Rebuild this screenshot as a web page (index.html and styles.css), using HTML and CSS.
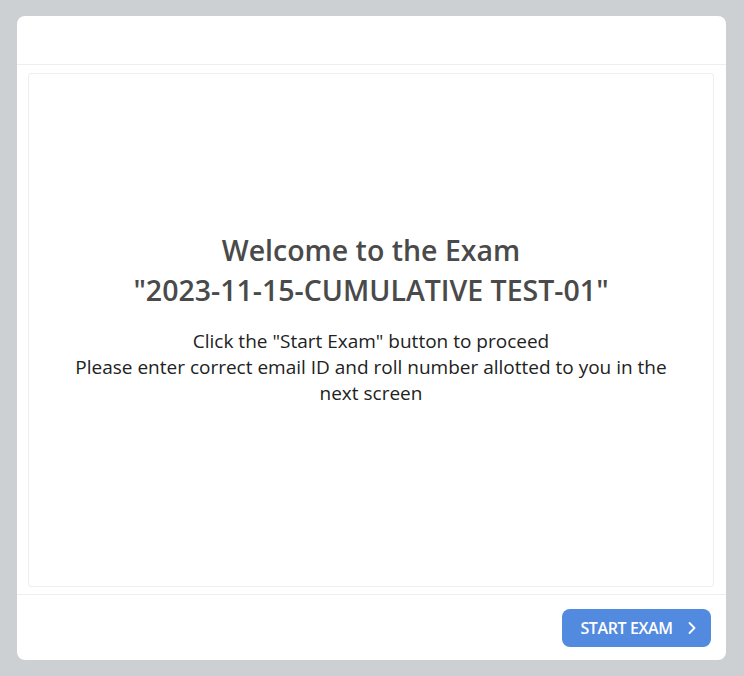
FILE: index.html
```html
<!DOCTYPE html>
<html>
<head>
<meta charset="utf-8">
<link rel="stylesheet" href="styles.css">
</head>
<body>
<div class="card">
  <div class="card-header"></div>
  <div class="card-body">
    <div class="panel">
      <h1 class="title">Welcome to the Exam<br>"2023-11-15-CUMULATIVE TEST-01"</h1>
      <p class="info">Click the "Start Exam" button to proceed<br>Please enter correct email ID and roll number allotted to you in the next screen</p>
    </div>
  </div>
  <div class="card-footer">
    <button class="start-btn">START EXAM
      <svg class="chev" width="10" height="14" viewBox="0 0 10 14"><path d="M2.5 2 L7.5 7 L2.5 12" fill="none" stroke="#fff" stroke-width="1.8" stroke-linecap="round" stroke-linejoin="round"/></svg>
    </button>
  </div>
</div>
</body>
</html>
```
FILE: styles.css
```css
html, body {
  margin: 0;
  padding: 0;
}
body {
  background: #ccd0d3;
  padding: 16px 18px 16px 17px;
  font-family: "Open Sans", "Noto Sans", sans-serif;
}
.card {
  background: #fff;
  border-radius: 8px;
  height: 644px;
  display: flex;
  flex-direction: column;
}
.card-header {
  height: 48px;
  border-bottom: 1px solid #eeeeee;
}
.card-body {
  flex: 1;
  padding: 8px 12px 7px 11px;
  display: flex;
  border-bottom: 1px solid #eeeeee;
}
.panel {
  flex: 1;
  border: 1px solid #eeeeee;
  border-radius: 3px;
  display: flex;
  flex-direction: column;
  align-items: center;
  justify-content: center;
  text-align: center;
  padding: 0 40px 24px;
}
.title {
  margin: 0;
  font-size: 28.5px;
  line-height: 40px;
  font-weight: 600;
  color: #4a4a4a;
}
.info {
  margin: 18px 0 0;
  font-size: 19px;
  line-height: 26px;
  color: #222;
}
.card-footer {
  height: 65px;
  display: flex;
  align-items: center;
  justify-content: flex-end;
  padding: 0 15px;
}
.start-btn {
  background: #528ae0;
  color: #fff;
  border: none;
  border-radius: 8px;
  height: 38px;
  width: 149px;
  margin-top: 1px;
  font-family: "Open Sans", "Noto Sans", sans-serif;
  font-size: 16px;
  font-weight: 600;
  letter-spacing: -0.4px;
  display: flex;
  align-items: center;
  justify-content: center;
  gap: 14px;
  padding: 0 0 0 4px;
}
.chev {
  display: block;
}
```
